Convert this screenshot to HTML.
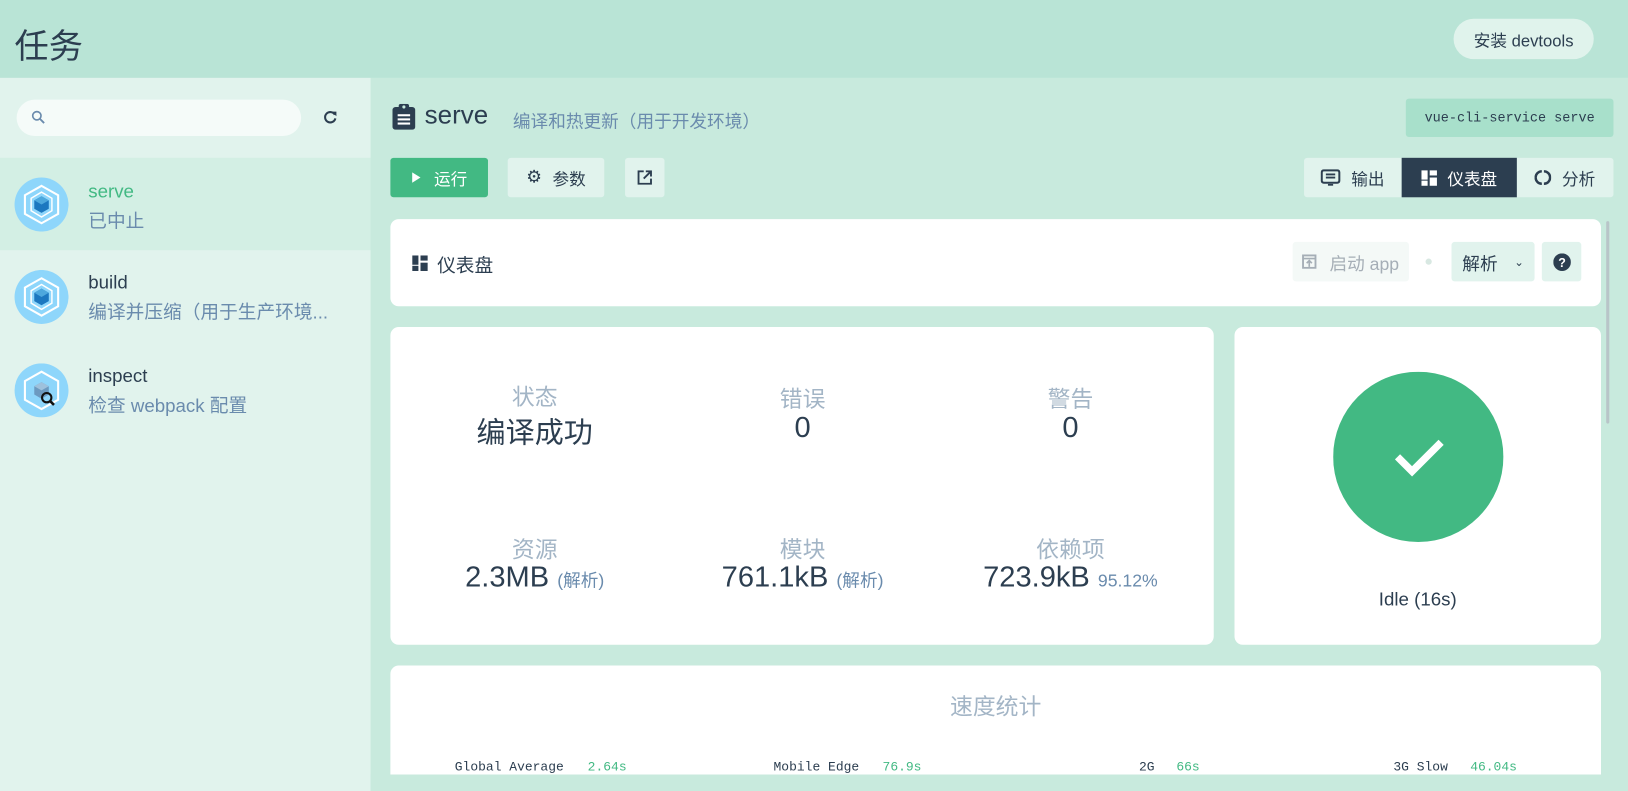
<!DOCTYPE html>
<html><head><meta charset="utf-8"><style>
html,body{margin:0;padding:0;width:1628px;height:791px;overflow:hidden;background:#c8eadd}
#w{position:absolute;left:0;top:0;width:1568px;height:762px;transform:scale(1.03827);transform-origin:0 0;font-family:"Liberation Sans","Noto Sans CJK SC",sans-serif;color:#2c3e50}
.a{position:absolute}
.hdr{left:0;top:0;width:1568px;height:75px;background:#b9e4d6}
.side{left:0;top:75px;width:357px;height:687px;background:#e1f3ed}
.main{left:357px;top:75px;width:1211px;height:687px;background:#c8eadd}
.card{background:#fff;border-radius:8px}
.btn{display:flex;align-items:center;justify-content:center;font-size:16px;border-radius:3px}
.lbl{color:#a3b5c6;font-size:22px;text-align:center;width:240px}
.val{font-size:28px;text-align:center;width:280px;white-space:nowrap}
.val small{font-size:17px;color:#6a8bad}
.mono{font-family:"Liberation Mono",monospace;font-size:12.5px}
.g{color:#42b983}
</style></head><body><div id="w">
<div class="a hdr"></div>
<div class="a" style="left:14px;top:18px;font-size:33px;">任务</div>
<div class="a btn" style="left:1400px;top:18px;width:135px;height:39px;border-radius:20px;background:#e0f3ec;font-size:16px">安装 devtools</div>

<div class="a side"></div>
<div class="a" style="left:16px;top:96px;width:274px;height:35px;border-radius:18px;background:#f5fbf9"></div>
<svg class="a" style="left:30px;top:106px" width="14" height="14" viewBox="0 0 14 14"><circle cx="5.5" cy="5.5" r="4" fill="none" stroke="#6a8bad" stroke-width="1.6"/><path d="M8.5 8.5L12.5 12.5" stroke="#6a8bad" stroke-width="1.8"/></svg>
<svg class="a" style="left:310px;top:105px" width="16" height="16" viewBox="0 0 16 16"><path d="M12.5 5.5A5 5 0 1 0 13 9" fill="none" stroke="#2c3e50" stroke-width="2"/><path d="M9.5 2.5h4.5v4.5z" fill="#2c3e50"/></svg>
<div class="a" style="left:0;top:152px;width:357px;height:89px;background:#d3efe4"></div>

<svg class="a" style="left:14px;top:171px" width="52" height="52" viewBox="0 0 52 52"><circle cx="26" cy="26" r="26" fill="#8ed6fb"/><path d="M26 8L42 17V35L26 44L10 35V17Z" fill="none" stroke="#fff" stroke-width="2"/><path d="M26 14L36 20V32L26 38L16 32V20Z" fill="none" stroke="#fff" stroke-width="1.4"/><path d="M26 18L33 22V30L26 34L19 30V22Z" fill="#1c78c0"/><path d="M26 18L33 22L26 26L19 22Z" fill="#4da8dd"/></svg>
<div class="a" style="left:85px;top:174px;font-size:18px;color:#42b983">serve</div>
<div class="a" style="left:85px;top:199px;font-size:18px;color:#6a8bad">已中止</div>

<svg class="a" style="left:14px;top:260px" width="52" height="52" viewBox="0 0 52 52"><circle cx="26" cy="26" r="26" fill="#8ed6fb"/><path d="M26 8L42 17V35L26 44L10 35V17Z" fill="none" stroke="#fff" stroke-width="2"/><path d="M26 14L36 20V32L26 38L16 32V20Z" fill="none" stroke="#fff" stroke-width="1.4"/><path d="M26 18L33 22V30L26 34L19 30V22Z" fill="#1c78c0"/><path d="M26 18L33 22L26 26L19 22Z" fill="#4da8dd"/></svg>
<div class="a" style="left:85px;top:262px;font-size:18px">build</div>
<div class="a" style="left:85px;top:287px;font-size:18px;color:#6a8bad;white-space:nowrap">编译并压缩（用于生产环境...</div>

<svg class="a" style="left:14px;top:350px" width="52" height="52" viewBox="0 0 52 52"><circle cx="26" cy="26" r="26" fill="#8ed6fb"/><path d="M26 8L42 17V35L26 44L10 35V17Z" fill="none" stroke="#fff" stroke-width="2"/><path d="M26 18L33 22V30L26 34L19 30V22Z" fill="#6c9ac0"/><path d="M26 18L33 22L26 26L19 22Z" fill="#9ec1dc"/><circle cx="31" cy="33" r="4.5" fill="none" stroke="#111" stroke-width="2"/><path d="M34 36L38 40" stroke="#111" stroke-width="2.5"/></svg>
<div class="a" style="left:85px;top:352px;font-size:18px">inspect</div>
<div class="a" style="left:85px;top:377px;font-size:18px;color:#6a8bad">检查 webpack 配置</div>

<div class="a main"></div>
<svg class="a" style="left:378px;top:100px" width="22" height="25" viewBox="0 0 22 25"><rect x="0" y="3" width="22" height="22" rx="3" fill="#2c3e50"/><rect x="6" y="0" width="10" height="6" rx="2" fill="#2c3e50"/><circle cx="11" cy="3" r="1.5" fill="#c8eadd"/><rect x="5" y="10" width="12" height="2" fill="#fff"/><rect x="5" y="14" width="12" height="2" fill="#fff"/><rect x="5" y="18" width="12" height="2" fill="#fff"/></svg>
<div class="a" style="left:409px;top:97px;font-size:25px">serve</div>
<div class="a" style="left:494px;top:103px;font-size:17px;color:#6a8bad">编译和热更新（用于开发环境）</div>
<div class="a btn" style="left:1354px;top:95px;width:200px;height:37px;background:#a8e0cb;border-radius:3px;font-family:'Liberation Mono',monospace;font-size:13px">vue-cli-service serve</div>

<div class="a btn" style="left:376px;top:152px;width:94px;height:38px;background:#42b983;color:#fff"><svg width="10" height="12" style="margin-right:12px"><path d="M1 1L9 6L1 11Z" fill="#fff"/></svg>运行</div>
<div class="a btn" style="left:489px;top:152px;width:93px;height:38px;background:#e1f3ed"><span style="font-size:17px;margin-right:10px">⚙</span>参数</div>
<div class="a btn" style="left:602px;top:152px;width:38px;height:38px;background:#e1f3ed"><svg width="14" height="14" viewBox="0 0 14 14"><path d="M6 1H1V13H13V8" fill="none" stroke="#2c3e50" stroke-width="1.8"/><path d="M8 1H13V6M13 1L6 8" fill="none" stroke="#2c3e50" stroke-width="1.8"/></svg></div>

<div class="a btn" style="left:1256px;top:152px;width:94px;height:38px;background:#e1f3ed;border-radius:3px 0 0 3px"><svg width="19" height="16" viewBox="0 0 19 16" style="margin-right:10px"><rect x="1" y="1" width="17" height="12" rx="2" fill="none" stroke="#2c3e50" stroke-width="2"/><path d="M5 5h9M5 8h9M7 15h5" stroke="#2c3e50" stroke-width="1.8"/></svg>输出</div>
<div class="a btn" style="left:1350px;top:152px;width:111px;height:38px;background:#2c3e50;color:#fff;border-radius:0"><svg width="15" height="15" style="margin-right:10px"><rect x="0" y="0" width="6" height="9" fill="#fff"/><rect x="8" y="0" width="7" height="5" fill="#fff"/><rect x="0" y="10" width="6" height="5" fill="#fff"/><rect x="8" y="7" width="7" height="8" fill="#fff"/></svg>仪表盘</div>
<div class="a btn" style="left:1461px;top:152px;width:93px;height:38px;background:#e1f3ed;border-radius:0 3px 3px 0"><svg width="16" height="16" style="margin-right:10px"><path d="M7 2A6 6 0 0 0 7 14M9 2A6 6 0 0 1 9 14" fill="none" stroke="#2c3e50" stroke-width="2.4"/></svg>分析</div>

<div class="a card" style="left:376px;top:211px;width:1166px;height:84px"></div>
<svg class="a" style="left:397px;top:246px" width="15" height="15"><rect x="0" y="0" width="6" height="9" fill="#2c3e50"/><rect x="8" y="0" width="7" height="5" fill="#2c3e50"/><rect x="0" y="10" width="6" height="5" fill="#2c3e50"/><rect x="8" y="7" width="7" height="8" fill="#2c3e50"/></svg>
<div class="a" style="left:421px;top:242px;font-size:18px">仪表盘</div>
<div class="a btn" style="left:1245px;top:233px;width:112px;height:38px;background:#f4f9f7;color:#a5aeb6;font-size:17px"><svg width="14" height="14" style="margin-right:12px"><rect x="1" y="1" width="12" height="12" fill="none" stroke="#a5aeb6" stroke-width="1.8"/><path d="M1 4h12M7 12V6M4.5 8.5L7 6L9.5 8.5" fill="none" stroke="#a5aeb6" stroke-width="1.6"/></svg>启动 app</div>
<div class="a" style="left:1373px;top:249px;width:6px;height:6px;border-radius:3px;background:#d8e8e2"></div>
<div class="a btn" style="left:1398px;top:233px;width:80px;height:38px;background:#e1f3ed;font-size:17px">解析<span style="margin-left:16px;font-size:11px">&#8964;</span></div>
<div class="a btn" style="left:1485px;top:233px;width:38px;height:38px;background:#e1f3ed"><svg width="17" height="17"><circle cx="8.5" cy="8.5" r="8.5" fill="#2c3e50"/><text x="8.5" y="13" font-size="12" font-weight="bold" fill="#fff" text-anchor="middle" font-family="Liberation Sans">?</text></svg></div>
<div class="a" style="left:1547px;top:213px;width:3px;height:195px;background:#b8c5c8;border-radius:2px"></div>

<div class="a card" style="left:376px;top:315px;width:793px;height:306px"></div>
<div class="a lbl" style="left:395px;top:365px">状态</div>
<div class="a val" style="left:375px;top:395px">编译成功</div>
<div class="a lbl" style="left:653px;top:367px">错误</div>
<div class="a val" style="left:633px;top:396px">0</div>
<div class="a lbl" style="left:911px;top:367px">警告</div>
<div class="a val" style="left:891px;top:396px">0</div>
<div class="a lbl" style="left:395px;top:512px">资源</div>
<div class="a val" style="left:375px;top:540px">2.3MB <small>(解析)</small></div>
<div class="a lbl" style="left:653px;top:512px">模块</div>
<div class="a val" style="left:633px;top:540px">761.1kB <small>(解析)</small></div>
<div class="a lbl" style="left:911px;top:512px">依赖项</div>
<div class="a val" style="left:891px;top:540px">723.9kB <small>95.12%</small></div>

<div class="a card" style="left:1189px;top:315px;width:353px;height:306px"></div>
<svg class="a" style="left:1284px;top:358px" width="164" height="164" viewBox="0 0 164 164"><circle cx="82" cy="82" r="82" fill="#42b983"/><path d="M62 82L76 96L104 68" fill="none" stroke="#fff" stroke-width="7"/></svg>
<div class="a" style="left:1189px;top:567px;width:353px;text-align:center;font-size:18px">Idle (16s)</div>

<div class="a card" style="left:376px;top:641px;width:1166px;height:105px;border-radius:8px 8px 0 0"></div>
<div class="a" style="left:376px;top:663px;width:1166px;text-align:center;font-size:22px;color:#a3b5c6">速度统计</div>
<div class="a mono" style="left:438px;top:732px">Global Average</div><div class="a mono g" style="left:566px;top:732px">2.64s</div>
<div class="a mono" style="left:745px;top:732px">Mobile Edge</div><div class="a mono g" style="left:850px;top:732px">76.9s</div>
<div class="a mono" style="left:1097px;top:732px">2G</div><div class="a mono g" style="left:1133px;top:732px">66s</div>
<div class="a mono" style="left:1342px;top:732px">3G Slow</div><div class="a mono g" style="left:1416px;top:732px">46.04s</div>
<div class="a" style="left:357px;top:746px;width:1211px;height:16px;background:#c8eadd"></div>
</div></body></html>
